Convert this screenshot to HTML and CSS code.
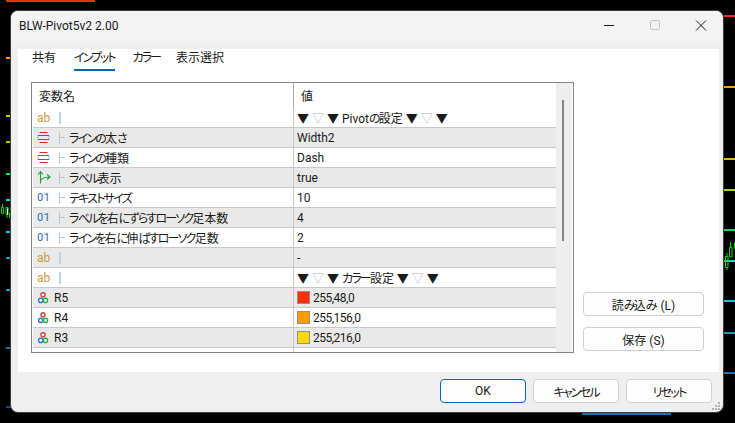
FILE: index.html
```html
<!DOCTYPE html>
<html lang="ja">
<head>
<meta charset="utf-8">
<title>BLW-Pivot5v2 2.00</title>
<link rel="stylesheet" href="styles.css">
</head>
<body>
<div class="chart">
  <i class="lv lv-top"></i>
  <i class="lv lv-bottom"></i>
  <i class="lr c-red r1"></i><i class="lr c-orange r2"></i><i class="lr c-yellow r3"></i><i class="lr c-lime r4"></i><i class="lr c-green r5"></i><i class="lr c-cyan r6"></i><i class="lr c-sky r7"></i><i class="lr c-teal r8"></i><i class="lr c-blue r9"></i>
  <i class="ll c-orange l1"></i><i class="ll c-yellow l2"></i><i class="ll c-lime l3"></i><i class="ll c-green l4"></i><i class="ll c-cyan l5"></i><i class="ll c-sky l6"></i><i class="ll c-teal l7"></i><i class="ll c-teal l8"></i><i class="ll c-blue l9"></i><i class="ll c-navy l10"></i>
  <svg class="candles" width="735" height="423" viewBox="0 0 735 423">
    <g fill="none" stroke="#00e000">
      <path d="M2.500 204v3M1.500 207.500h2v6h-2zM6 207.500h2v7H6zM7 215v3M9.500 212.500h2v5h-2zM10.500 208v4"/>
      <path d="M727 253v3M725.500 256.500h2.500v11h-2.500zM727 268v2M730.500 242v5M729.500 247.500h2.500v9.500h-2.500zM734.500 242.500v6.500"/>
    </g>
    <path d="M7 208.500h1v6H7z" fill="#fff"/>
  </svg>
</div>
<div class="dialog">
  <header class="titlebar">
    <span class="title">BLW-Pivot5v2 2.00</span>
    <div class="wincontrols">
      <svg class="wc" width="46" height="30" viewBox="0 0 46 30"><path d="M19 14.500h10" stroke="#1a1a1a" fill="none"/></svg>
      <svg class="wc" width="46" height="30" viewBox="0 0 46 30"><rect x="19.500" y="9.500" width="9" height="9" rx="1.500" stroke="#c4c4c4" fill="none"/></svg>
      <svg class="wc" width="46" height="30" viewBox="0 0 46 30"><path d="M19 9.500l10 10M29 9.500l-10 10" stroke="#1a1a1a" fill="none"/></svg>
    </div>
  </header>
  <main class="panel">
    <nav class="tabs">
      <span class="tab">共有</span>
      <span class="tab active"><span class="k">インプット</span></span>
      <span class="tab tab-narrow"><span class="k">カラー</span></span>
      <span class="tab">表示選択</span>
    </nav>
    <div class="content">
      <section class="grid">
        <div class="rows">
          <div class="row head"><div class="c1"><span class="hlabel">変数名</span></div><div class="c2"><span class="hlabel">値</span></div></div>

          <div class="row"><div class="c1"><span class="ic ab">ab</span><i class="tick"></i></div><div class="c2 sym">▼ <b>▽</b> ▼ Pivot<span class="k">の</span>設定 ▼ <b>▽</b> ▼</div></div>

          <div class="row alt"><div class="c1"><svg class="ic" width="16" height="15" viewBox="0 0 16 15"><use href="#lines"/></svg><i class="tick branch"></i><span><span class="k">ラインの</span>太<span class="k">さ</span></span></div><div class="c2">Width2</div></div>
          <div class="row"><div class="c1"><svg class="ic" width="16" height="15" viewBox="0 0 16 15"><use href="#lines"/></svg><i class="tick branch"></i><span><span class="k">ラインの</span>種類</span></div><div class="c2">Dash</div></div>
          <div class="row alt"><div class="c1"><svg class="ic" width="16" height="15" viewBox="0 0 16 15"><path d="M4 13.500V2M1.500 4.500L4 1.500l2.500 3M4 10.500C6 8 8.500 7 13 7M10.500 4.500L13.500 7l-3 2.500" stroke="#1fa13a" stroke-width="1.100" fill="none"/></svg><i class="tick branch"></i><span><span class="k">ラベル</span>表示</span></div><div class="c2">true</div></div>
          <div class="row"><div class="c1"><span class="ic num">01</span><i class="tick branch"></i><span><span class="k">テキストサイズ</span></span></div><div class="c2">10</div></div>
          <div class="row alt"><div class="c1"><span class="ic num">01</span><i class="tick branch"></i><span><span class="k">ラベルを</span>右<span class="k">にずらすローソク</span>足本数</span></div><div class="c2">4</div></div>
          <div class="row"><div class="c1"><span class="ic num">01</span><i class="tick branch"></i><span><span class="k">ラインを</span>右<span class="k">に</span>伸<span class="k">ばすローソク</span>足数</span></div><div class="c2">2</div></div>
          <div class="row alt"><div class="c1"><span class="ic ab">ab</span><i class="tick"></i></div><div class="c2">-</div></div>
          <div class="row"><div class="c1"><span class="ic ab">ab</span><i class="tick"></i></div><div class="c2 sym">▼ <b>▽</b> ▼ <span class="k">カラー</span>設定 ▼ <b>▽</b> ▼</div></div>

          <div class="row alt"><div class="c1"><svg class="ic" width="16" height="15" viewBox="0 0 16 15"><use href="#rgb"/></svg><span class="cname">R5</span></div><div class="c2 rgb"><i class="swatch s-r5"></i>255,48,0</div></div>
          <div class="row"><div class="c1"><svg class="ic" width="16" height="15" viewBox="0 0 16 15"><use href="#rgb"/></svg><span class="cname">R4</span></div><div class="c2 rgb"><i class="swatch s-r4"></i>255,156,0</div></div>
          <div class="row alt"><div class="c1"><svg class="ic" width="16" height="15" viewBox="0 0 16 15"><use href="#rgb"/></svg><span class="cname">R3</span></div><div class="c2 rgb"><i class="swatch s-r3"></i>255,216,0</div></div>
          <div class="row cut"><div class="c1"></div><div class="c2"><i class="swatch s-cut"></i></div></div>
        </div>
        <div class="scroll"><i class="thumb"></i></div>
      </section>
      <aside class="side">
        <button class="btn side-btn">読<span class="k">み</span>込み (L)</button>
        <button class="btn side-btn">保存 (S)</button>
      </aside>
    </div>
  </main>
  <footer class="foot">
    <button class="btn foot-btn primary">OK</button>
    <button class="btn foot-btn"><span class="k">キャンセル</span></button>
    <button class="btn foot-btn"><span class="k">リセット</span></button>
    <svg class="grip" width="9" height="9" viewBox="0 0 9 9"><path d="M6 0h2v2H6zM3 3h2v2H3zM6 3h2v2H6zM0 6h2v2H0zM3 6h2v2H3zM6 6h2v2H6z" fill="#b4b4b4"/></svg>
  </footer>
</div>
<svg class="defs" width="0" height="0">
  <defs>
    <g id="lines" fill="none" stroke-width="1">
      <path d="M3 2.500h8M3 12.500h8" stroke="#e0241c"/>
      <path d="M1.500 5.500h11M1.500 9.500h11" stroke="#1a70c8"/>
      <path d="M1.500 5.500v4M12.500 5.500v4" stroke="#1a70c8" stroke-opacity=".45"/>
    </g>
    <g id="rgb" fill="#fff" stroke-width="1.400">
      <circle cx="6.500" cy="4.800" r="2.100" stroke="#d8413a"/>
      <circle cx="4.200" cy="10.400" r="2.100" stroke="#2a78c8"/>
      <circle cx="9" cy="10.400" r="2.100" stroke="#2fa84a"/>
    </g>
  </defs>
</svg>
</body>
</html>
```

FILE: styles.css
```css
* { box-sizing: border-box; }
html, body { margin: 0; height: 100%; }
body {
  width: 735px;
  height: 423px;
  background: #000;
  overflow: hidden;
  position: relative;
  font-family: Roboto, "Noto Sans CJK JP", sans-serif;
  font-feature-settings: "palt";
  font-size: 12px;
  color: #1a1a1a;
}

/* kana runs are set narrow, as in the UI font of the original */
.k { letter-spacing: -1.8px; }
.tab .k { letter-spacing: -2px; }

/* chart behind the dialog */
.chart { position: absolute; inset: 0; }
.chart i { position: absolute; display: block; height: 2px; }
.candles { position: absolute; left: 0; top: 0; display: block; }
.lv-top { left: 6px; top: 0; width: 89px; background: #e8300a; }
.lv-bottom { left: 582px; top: 413px; width: 89px; background: #1a6fb0; }
.lr { left: 724px; width: 11px; }
.ll { left: 6px; width: 5px; }
.c-red { background: #ff3000; }
.c-orange { background: #ff9c00; }
.c-yellow { background: #e0b800; }
.c-lime { background: #a8d400; }
.c-green { background: #10d860; }
.c-cyan { background: #10d8d0; }
.c-sky { background: #10c0d8; }
.c-teal { background: #1a98b8; }
.c-blue { background: #1a70a8; }
.c-navy { background: #1a40a8; }
.r1 { top: 15px; } .r2 { top: 86px; } .r3 { top: 158px; } .r4 { top: 189px; } .r5 { top: 229px; }
.r6 { top: 260px; } .r7 { top: 300px; } .r8 { top: 332px; } .r9 { top: 372px; }
.l1 { top: 57px; } .l2 { top: 115px; } .l3 { top: 141px; } .l4 { top: 173px; } .l5 { top: 199px; }
.l6 { top: 231px; } .l7 { top: 257px; } .l8 { top: 289px; } .l9 { top: 347px; } .l10 { top: 406px; }

/* dialog */
.dialog {
  position: absolute;
  left: 10px;
  top: 10px;
  width: 714px;
  height: 403px;
  background: #efefef;
  border: 1px solid #3a3a3a;
  border-radius: 8px;
  display: flex;
  flex-direction: column;
  overflow: hidden;
}
.titlebar {
  height: 30px;
  flex: none;
  background: #f3f3f3;
  display: flex;
  align-items: center;
  justify-content: space-between;
  padding-left: 8px;
}
.wincontrols { display: flex; align-items: center; }
.wc { display: block; }

.panel {
  flex: none;
  height: 323px;
  margin: 8px 4px 0 7px;
  background: #fff;
  padding: 0 0 0 13px;
  display: flex;
  flex-direction: column;
}
.tabs { display: flex; height: 22px; flex: none; margin-left: 1px; }
.tab { height: 22px; line-height: 19px; margin-right: 18px; white-space: nowrap; }
.tab-narrow { margin-right: 16px; }
.tab.active { border-bottom: 2px solid #0067c0; }

.content { display: flex; flex: 1; margin-top: 11px; }
.grid {
  width: 543px;
  height: 271px;
  border: 1px solid #858585;
  display: flex;
  background: #fff;
  padding: 0 1px;
  flex: none;
  overflow: hidden;
}
.rows { width: 523px; flex: none; }
.row { display: flex; height: 20px; border-bottom: 1px solid #c8c8c8; }
.row.head { height: 25px; border-bottom: 0; }
.row.alt { background: #e9e9e9; }
.row.cut { height: 6px; border-bottom: 0; overflow: hidden; }
.c1 { width: 260px; display: flex; align-items: center; flex: none; padding-left: 3px; white-space: nowrap; }
.c2 { flex: 1; display: flex; align-items: center; padding-left: 3px; border-left: 1px solid #c8c8c8; white-space: nowrap; }
.head .c1 { padding-left: 6px; }
.head .c2 { padding-left: 7px; border-left-color: #a8a8a8; }
.hlabel { display: block; }
.sym { white-space: pre; }
.sym b { font-weight: normal; color: #b8b8b8; }
.rgb { letter-spacing: -0.5px; }
.ic { width: 17px; flex: none; display: block; margin-right: 6px; padding-left: 1px; }
svg.ic { padding: 0; }
.ab { color: #c99a45; }
.num { color: #1f6fb5; font-size: 11px; letter-spacing: 0.5px; }
.tick { display: block; width: 2px; height: 12px; background: #bcd3e8; flex: none; }
.tick.branch { width: 7px; margin-right: 3px; background:
  linear-gradient(#bcc8d4, #bcc8d4) 0 0 / 1px 100% no-repeat,
  linear-gradient(#bcc8d4, #bcc8d4) 0 50% / 6px 1px no-repeat; }
.cname { margin-left: -5px; }
.swatch { display: block; width: 13px; height: 13px; margin-right: 3px; border: 1px solid #909090; flex: none; }
.s-r5 { background: #ff3000; }
.s-r4 { background: #ff9c00; }
.s-r3 { background: #ffd800; }
.cut .c2 { align-items: flex-start; }
.s-cut { background: #c8c8c8; margin-top: 4px; }
.scroll { flex: 1; background: #eeeeee; position: relative; }
.thumb { position: absolute; left: 6px; top: 17px; width: 2px; height: 141px; background: #858585; display: block; }

.side { display: flex; flex-direction: column; gap: 11px; margin: 210px 0 0 9px; }
.btn {
  font: inherit;
  font-feature-settings: inherit;
  color: #1a1a1a;
  background: #fdfdfd;
  border: 1px solid #d0d0d0;
  border-radius: 4px;
  padding: 0;
  height: 24px;
  white-space: nowrap;
}
.side-btn { width: 121px; }
.foot {
  flex: 1;
  display: flex;
  gap: 7px;
  padding: 7px 0 0 429px;
  position: relative;
}
.foot-btn { width: 86px; }
.primary { border: 1px solid #0067c0; }
.grip { position: absolute; right: 2px; bottom: 1px; display: block; }
.defs { position: absolute; }
```
